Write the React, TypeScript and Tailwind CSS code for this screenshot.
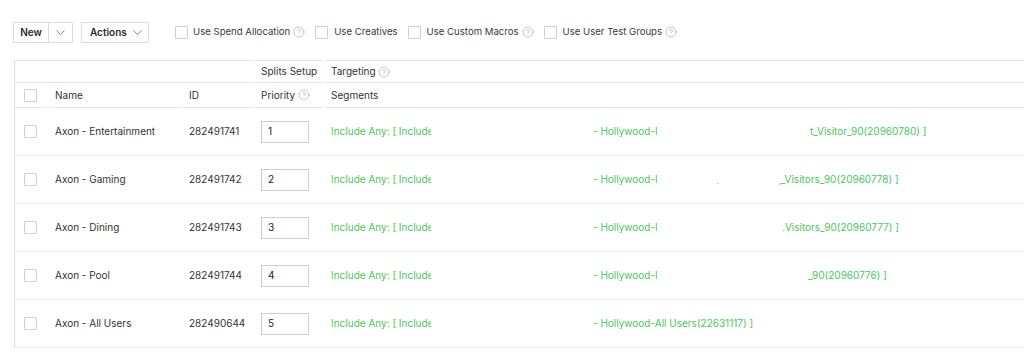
import React from "react";
import { CircleHelp } from "lucide-react";

const Chevron = () => (
  <svg width="9" height="5" viewBox="0 0 9 5" fill="none">
    <polyline points="0.5,0.5 4.5,4.5 8.5,0.5" stroke="#8a8a8a" strokeWidth="1" />
  </svg>
);

const Help = () => <CircleHelp size={12} strokeWidth={1.2} color="#a0a0a0" />;

const Box = () => <div className="w-[13px] h-[13px] border border-[#cfcfcf] bg-white rounded-[1px]" />;

type Row = {
  name: string;
  id: string;
  prio: string;
  a: string;
  b: string;
  bw: string;
  c: string;
  cml: string;
  dot?: boolean;
};

const rows: Row[] = [
  { name: "Axon - Entertainment", id: "282491741", prio: "1", a: "Include Any: [ Include", b: "- Hollywood-I", bw: "w-[64px]", c: "t_Visitor_90(20960780) ]", cml: "ml-[153px]" },
  { name: "Axon - Gaming", id: "282491742", prio: "2", a: "Include Any: [ Include :", b: "- Hollywood-I", bw: "w-[64px]", c: "\u02cc_Visitors_90(20960778) ]", cml: "ml-[60px]", dot: true },
  { name: "Axon - Dining", id: "282491743", prio: "3", a: "Include Any: [ Include :", b: "- Hollywood-I", bw: "w-[64px]", c: ".Visitors_90(20960777) ]", cml: "ml-[125px]" },
  { name: "Axon - Pool", id: "282491744", prio: "4", a: "Include Any: [ Include :", b: "- Hollywood-I", bw: "w-[64px]", c: "_90(20960776) ]", cml: "ml-[151px]" },
  { name: "Axon - All Users", id: "282490644", prio: "5", a: "Include Any: [ Include :", b: "- Hollywood-All Users(22631117) ]", bw: "w-[200px]", c: "", cml: "" },
];

export default function App() {
  return (
    <div className="w-[1024px] h-[352px] overflow-hidden bg-white text-[10px] text-[#333]" style={{ fontFamily: "Inter, 'Liberation Sans', sans-serif" }}>
      {/* Toolbar */}
      <div className="flex items-center pl-[13px] pt-[22px] h-[43px]">
        <div className="flex h-[21px] border border-[#dcdcdc] rounded-[1px]">
          <div className="w-[34px] flex items-center justify-center font-semibold text-[#2b2b2b]">New</div>
          <div className="w-px bg-[#dcdcdc]" />
          <div className="w-[23px] flex items-center justify-center"><Chevron /></div>
        </div>
        <div className="ml-[8px] flex items-center h-[21px] w-[68px] border border-[#dcdcdc] rounded-[1px] pl-[8px] pr-[6px] justify-between">
          <span className="font-semibold text-[#2b2b2b]">Actions</span>
          <Chevron />
        </div>
        <div className="ml-[26px] flex items-center gap-[10px] text-[#3a3a3a] text-[9.6px]">
          <div className="flex items-center">
            <Box />
            <span className="ml-[5px]">Use Spend Allocation</span>
            <span className="ml-[3px] flex"><Help /></span>
          </div>
          <div className="flex items-center">
            <Box />
            <span className="ml-[6px]">Use Creatives</span>
          </div>
          <div className="flex items-center">
            <Box />
            <span className="ml-[6px]">Use Custom Macros</span>
            <span className="ml-[3px] flex"><Help /></span>
          </div>
          <div className="flex items-center">
            <Box />
            <span className="ml-[6px]">Use User Test Groups</span>
            <span className="ml-[3px] flex"><Help /></span>
          </div>
        </div>
      </div>

      {/* Table */}
      <div className="mt-[17px] ml-[14px] w-[1040px] border-l border-[#dedede]">
        {/* header row 1 */}
        <div className="grid grid-cols-[238px_68px_1fr] gap-x-[2px] text-[#333]">
          <div className="h-[23px] border-t border-b border-[#e3e3e3]" />
          <div className="h-[23px] border-t border-b border-[#e3e3e3] flex items-center pl-[6px]">Splits Setup</div>
          <div className="h-[23px] border-t border-b border-[#e3e3e3] flex items-center pl-[6px]">
            Targeting<span className="ml-[2px] flex"><Help /></span>
          </div>
        </div>
        {/* header row 2 */}
        <div className="grid grid-cols-[32px_132px_70px_68px_1fr] gap-x-[2px] text-[#333]">
          <div className="h-[25px] border-b border-[#e3e3e3] flex items-center pl-[9px]"><Box /></div>
          <div className="h-[25px] border-b border-[#e3e3e3] flex items-center pl-[6px]">Name</div>
          <div className="h-[25px] border-b border-[#e3e3e3] flex items-center pl-[6px]">ID</div>
          <div className="h-[25px] border-b border-[#e3e3e3] flex items-center pl-[6px]">
            Priority<span className="ml-[3px] flex"><Help /></span>
          </div>
          <div className="h-[25px] border-b border-[#e3e3e3] flex items-center pl-[6px]">Segments</div>
        </div>
        {rows.map((r) => (
          <div key={r.id} className="grid grid-cols-[32px_132px_70px_68px_1fr] gap-x-[2px] h-[48px] border-b border-[#ebebeb] items-center">
            <div className="pl-[9px] flex"><Box /></div>
            <div className="pl-[6px] text-[#333]">{r.name}</div>
            <div className="pl-[6px] text-[#333]">{r.id}</div>
            <div className="pl-[6px] flex">
              <div className="w-[48px] h-[22px] border border-[#cfcfcf] flex items-center pl-[6px] text-[#222]">{r.prio}</div>
            </div>
            <div className="pl-[6px] flex items-center text-[#46c957] whitespace-nowrap">
              <div className="w-[262px] flex">
                <span className="w-[100px] overflow-hidden">{r.a}</span>
              </div>
              <span className={`${r.bw} overflow-hidden`}>{r.b}</span>
              {r.dot && <span className="ml-[60px] mt-[8px] w-[2px] h-[1px] bg-[#a8e6b0]" />}
              {r.c && <span className={r.cml}>{r.c}</span>}
            </div>
          </div>
        ))}
      </div>
    </div>
  );
}
